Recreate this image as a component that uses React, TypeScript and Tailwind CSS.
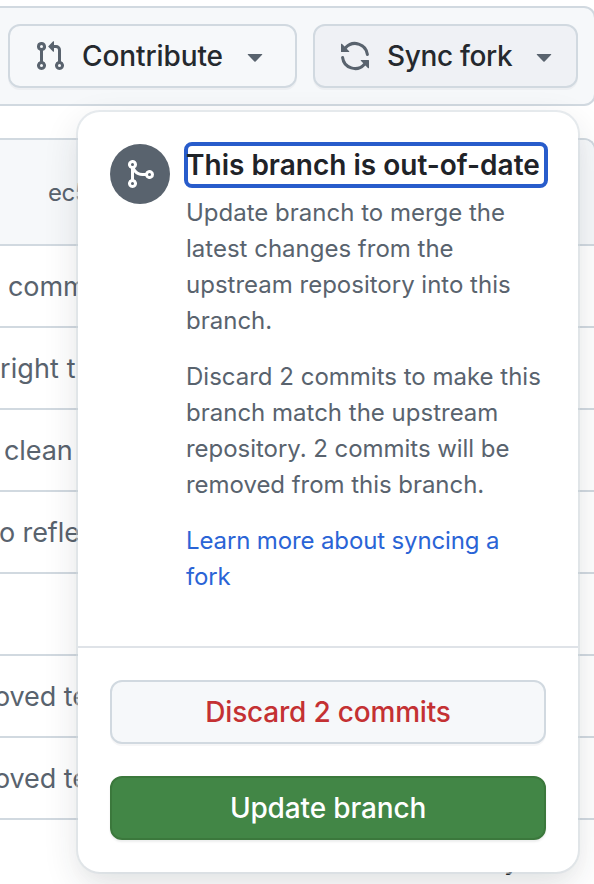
import React from "react";

const icons = {
  pullRequest:
    "M1.5 3.25a2.25 2.25 0 1 1 3 2.122v5.256a2.251 2.251 0 1 1-1.5 0V5.372A2.25 2.25 0 0 1 1.5 3.25Zm5.677-.177L9.573.677A.25.25 0 0 1 10 .854V2.5h1A2.5 2.5 0 0 1 13.5 5v5.628a2.251 2.251 0 1 1-1.5 0V5a1 1 0 0 0-1-1h-1v1.646a.25.25 0 0 1-.427.177L7.177 3.427a.25.25 0 0 1 0-.354ZM3.75 2.5a.75.75 0 1 0 0 1.5.75.75 0 0 0 0-1.5Zm0 9.5a.75.75 0 1 0 0 1.5.75.75 0 0 0 0-1.5Zm8.25.75a.75.75 0 1 0 1.5 0 .75.75 0 0 0-1.5 0Z",
  sync: "M1.705 8.005a.75.75 0 0 1 .834.656 5.5 5.5 0 0 0 9.592 2.97l-1.204-1.204a.25.25 0 0 1 .177-.427h3.646a.25.25 0 0 1 .25.25v3.646a.25.25 0 0 1-.427.177l-1.38-1.38A7.002 7.002 0 0 1 1.05 8.84a.75.75 0 0 1 .656-.834ZM8 2.5a5.487 5.487 0 0 0-4.131 1.869l1.204 1.204A.25.25 0 0 1 4.896 6H1.25A.25.25 0 0 1 1 5.75V2.104a.25.25 0 0 1 .427-.177l1.38 1.38A7.002 7.002 0 0 1 14.95 7.16a.75.75 0 0 1-1.49.178A5.5 5.5 0 0 0 8 2.5Z",
  merge:
    "M5.45 5.154A4.25 4.25 0 0 0 9.25 7.5h1.378a2.251 2.251 0 1 1 0 1.5H9.25A5.734 5.734 0 0 1 5 7.123v3.505a2.25 2.25 0 1 1-1.5 0V5.372a2.25 2.25 0 1 1 1.95-.218ZM4.25 13.5a.75.75 0 1 0 0-1.5.75.75 0 0 0 0 1.5Zm8.5-4.5a.75.75 0 1 0 0-1.5.75.75 0 0 0 0 1.5ZM5 3.25a.75.75 0 1 0-1.5 0 .75.75 0 0 0 1.5 0Z",
  triangle:
    "m4.427 7.427 3.396 3.396a.25.25 0 0 0 .354 0l3.396-3.396A.25.25 0 0 0 11.396 7H4.604a.25.25 0 0 0-.177.427Z",
};

function Icon({ name, className = "" }: { name: keyof typeof icons; className?: string }) {
  return (
    <svg viewBox="0 0 16 16" fill="currentColor" className={`size-8 shrink-0 ${className}`}>
      <path d={icons[name]} />
    </svg>
  );
}

const rows = [
  { text: "comm", className: "pl-[8px]" },
  { text: "right t", className: "pl-0 tracking-[0.1px]" },
  { text: "clean", className: "pl-[4px]" },
  { text: "o refle", className: "-ml-px" },
  { text: "", className: "" },
  { text: "oved te", className: "-ml-[6px]" },
  { text: "oved te", className: "-ml-[6px]" },
];

export default function App() {
  return (
    <div className="relative h-[884px] w-[594px] overflow-hidden bg-white font-['Inter','Liberation_Sans',sans-serif] text-[#59636e]">
      <div className="mt-[6px] flex h-[100px] w-[596px] items-start rounded-r-xl border-2 border-l-0 border-[#d1d9e0] bg-[#f6f8fa] pt-4 pl-2">
        <button className="flex h-16 w-[289px] items-center rounded-xl border-2 border-[#d1d9e0] pl-6 shadow-[0_2px_0_rgba(31,35,40,0.04)]">
          <Icon name="pullRequest" />
          <span className="ml-4 w-[142px] text-left text-[28px] font-medium tracking-[-0.1px] whitespace-nowrap text-[#25292e]">
            Contribute
          </span>
          <Icon name="triangle" className="ml-[15px]" />
        </button>
        <button className="ml-4 flex h-16 w-[265px] items-center rounded-xl border-2 border-[#d1d9e0] bg-[#eff1f5] pl-6 shadow-[0_2px_0_rgba(31,35,40,0.04)]">
          <Icon name="sync" />
          <span className="ml-4 w-[126px] text-left text-[28px] font-medium tracking-[-0.35px] whitespace-nowrap text-[#25292e]">
            Sync fork
          </span>
          <Icon name="triangle" className="ml-[15px]" />
        </button>
      </div>

      <div className="mt-8 w-[596px] overflow-hidden rounded-tr-xl border-t-2 border-r-2 border-[#d1d9e0]">
        <div className="flex h-[104px] items-center bg-[#f6f8fa] pl-12 text-2xl tracking-[-0.5px]">
          <span className="pt-[2px]">ec5</span>
        </div>
        {rows.map((row, i) => (
          <div key={i} className="flex h-[82px] items-center border-t-2 border-[#d1d9e0] pt-[2px] text-[27px] tracking-[-0.1px]">
            <span className={`whitespace-nowrap ${row.className}`}>{row.text}</span>
          </div>
        ))}
        <div className="h-16 border-t-2 border-[#d1d9e0] pt-[18px] pl-[504px] text-[28px]">
          <span className="text-[#25292e]">y</span>
        </div>
      </div>

      <div className="absolute top-[112px] left-[78px] flex h-[760px] w-[500px] flex-col rounded-[22px] bg-white shadow-[0_0_0_2px_rgba(209,217,224,0.5),0_12px_24px_-6px_rgba(37,41,46,0.04),0_12px_36px_0_rgba(37,41,46,0.12)]">
        <div className="flex h-[534px] items-start pt-8 pl-8">
          <div className="flex size-[60px] items-center justify-center rounded-full bg-[#59636e] text-white">
            <Icon name="merge" />
          </div>
          <div className="mt-[-2px] ml-[14px] w-[364px]">
            <h3 className="flex h-[46px] items-center rounded-lg border-4 border-[#285ccb] text-[28px] font-semibold whitespace-nowrap text-[#1f2328]">
              <span className="-ml-[2px]">This branch is out-of-date</span>
            </h3>
            <div className="pt-[7px] pl-[2px] text-2xl leading-9 whitespace-nowrap">
              <p>
                Update branch to merge the
                <br />
                latest changes from the
                <br />
                upstream repository into this
                <br />
                branch.
              </p>
              <p className="mt-5">
                Discard 2 commits to make this
                <br />
                branch match the upstream
                <br />
                <span className="tracking-[-0.04px]">repository. 2 commits will be</span>
                <br />
                <span className="tracking-[-0.04px]">removed from this branch.</span>
              </p>
              <p className="mt-5 tracking-[-0.13px] text-[#2a64d6]">
                Learn more about syncing a
                <br />
                fork
              </p>
            </div>
          </div>
        </div>
        <div className="flex flex-col gap-8 border-t-2 border-[#dfe3e8] px-8 pt-8 text-[28px] font-medium">
          <button className="flex h-16 items-center justify-center rounded-xl border-2 border-[#d1d9e0] bg-[#f6f8fa] tracking-[-0.2px] text-[#c43133] shadow-[0_2px_0_rgba(31,35,40,0.04)]">
            Discard 2 commits
          </button>
          <button className="flex h-16 items-center justify-center rounded-xl border-2 border-[#3b783c] bg-[#428646] tracking-[-0.15px] text-white shadow-[0_2px_2px_rgba(31,35,40,0.08)]">
            Update branch
          </button>
        </div>
      </div>
    </div>
  );
}
